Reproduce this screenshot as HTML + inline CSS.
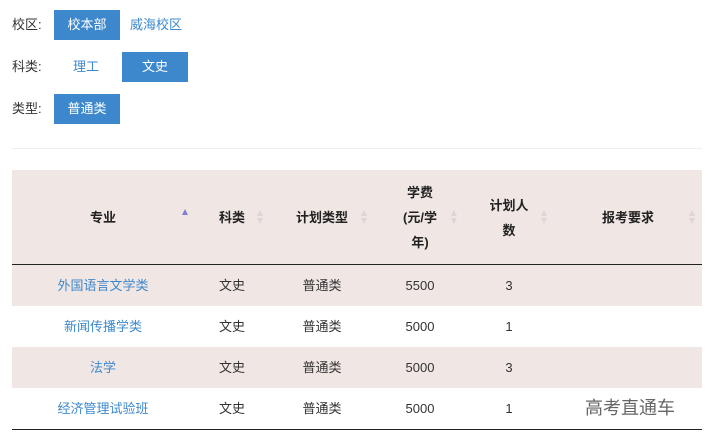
<!DOCTYPE html><html><head><meta charset="utf-8"><style>
body{margin:0;width:720px;height:447px;background:#fff;font-family:"Liberation Sans","Noto Sans CJK SC",sans-serif;font-size:13px;color:#333;position:relative;overflow:hidden}
.a{position:absolute;line-height:16px}
.btn{position:absolute;background:#3d88cc;color:#fff;width:66px;height:30px;line-height:30px;text-align:center;font-size:13px}
.lk{color:#3d88cc}
.c{position:absolute;text-align:center;width:120px;margin-left:-60px;white-space:nowrap;height:41px;line-height:41px}
.h{font-weight:bold;color:#222;font-size:13px}
.hh{position:absolute;text-align:center;width:120px;margin-left:-60px;white-space:nowrap;font-weight:bold;color:#222;line-height:25px}
.arr{position:absolute;width:0;height:0}
.up{border-left:3.5px solid transparent;border-right:3.5px solid transparent;border-bottom:6px solid #dcd6d6}
.dn{border-left:3.5px solid transparent;border-right:3.5px solid transparent;border-top:6px solid #dcd6d6}
</style></head><body>
<div class="a" style="left:12px;top:17px">校区:</div>
<div class="btn" style="left:54px;top:10px">校本部</div>
<div class="a lk" style="left:130px;top:17px">威海校区</div>
<div class="a" style="left:12px;top:59px">科类:</div>
<div class="a lk" style="left:73px;top:59px">理工</div>
<div class="btn" style="left:122px;top:52px">文史</div>
<div class="a" style="left:12px;top:101px">类型:</div>
<div class="btn" style="left:54px;top:94px">普通类</div>
<div class="a" style="left:12px;top:148px;width:690px;height:1px;background:#eee"></div>

<div class="a" style="left:12px;top:170px;width:690px;height:95px;background:#f0e6e4"></div>
<div class="a" style="left:12px;top:264px;width:690px;height:1.5px;background:#222"></div>
<div class="a" style="left:12px;top:265px;width:690px;height:41px;background:#f0e6e4"></div>
<div class="a" style="left:12px;top:347px;width:690px;height:41px;background:#f0e6e4"></div>
<div class="a" style="left:12px;top:429px;width:690px;height:1px;background:#222"></div>

<div class="hh" style="left:103px;top:205px">专业</div>
<div class="hh" style="left:232px;top:205px">科类</div>
<div class="hh" style="left:322px;top:205px">计划类型</div>
<div class="hh" style="left:420px;top:180px">学费<br>(元/学<br>年)</div>
<div class="hh" style="left:509px;top:193px">计划人<br>数</div>
<div class="hh" style="left:628px;top:205px">报考要求</div>

<div class="arr up" style="left:182px;top:209px;border-bottom-color:#7d7fd6"></div>
<div class="arr up" style="left:257px;top:210px"></div><div class="arr dn" style="left:257px;top:218px"></div>
<div class="arr up" style="left:361px;top:210px"></div><div class="arr dn" style="left:361px;top:218px"></div>
<div class="arr up" style="left:451px;top:210px"></div><div class="arr dn" style="left:451px;top:218px"></div>
<div class="arr up" style="left:541px;top:210px"></div><div class="arr dn" style="left:541px;top:218px"></div>
<div class="arr up" style="left:689px;top:210px"></div><div class="arr dn" style="left:689px;top:218px"></div>

<div class="c lk" style="left:103px;top:265px">外国语言文学类</div>
<div class="c" style="left:232px;top:265px">文史</div>
<div class="c" style="left:322px;top:265px">普通类</div>
<div class="c" style="left:420px;top:265px">5500</div>
<div class="c" style="left:509px;top:265px">3</div>

<div class="c lk" style="left:103px;top:306px">新闻传播学类</div>
<div class="c" style="left:232px;top:306px">文史</div>
<div class="c" style="left:322px;top:306px">普通类</div>
<div class="c" style="left:420px;top:306px">5000</div>
<div class="c" style="left:509px;top:306px">1</div>

<div class="c lk" style="left:103px;top:347px">法学</div>
<div class="c" style="left:232px;top:347px">文史</div>
<div class="c" style="left:322px;top:347px">普通类</div>
<div class="c" style="left:420px;top:347px">5000</div>
<div class="c" style="left:509px;top:347px">3</div>

<div class="c lk" style="left:103px;top:388px">经济管理试验班</div>
<div class="c" style="left:232px;top:388px">文史</div>
<div class="c" style="left:322px;top:388px">普通类</div>
<div class="c" style="left:420px;top:388px">5000</div>
<div class="c" style="left:509px;top:388px">1</div>

<div class="a" style="left:585px;top:396px;font-size:18px;line-height:24px;color:#666">高考直通车</div>
</body></html>
